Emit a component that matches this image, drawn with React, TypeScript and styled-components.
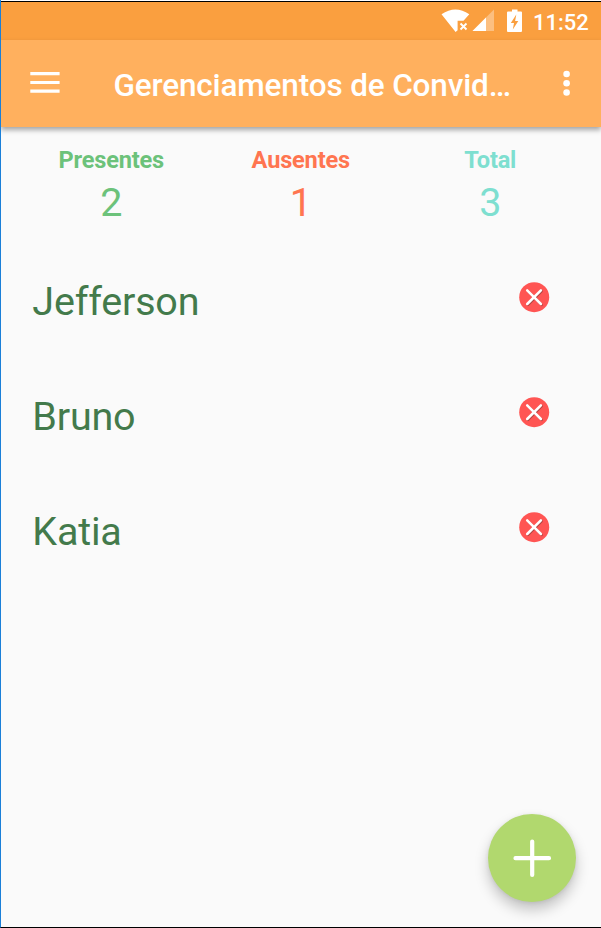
import React from "react";
import styled, { createGlobalStyle } from "styled-components";

const GlobalStyle = createGlobalStyle`
  * { box-sizing: border-box; }
  body { margin: 0; background: #fafafa; font-family: Roboto, sans-serif; }
  button { border: 0; padding: 0; background: none; font: inherit; color: inherit; display: block; }
  svg { display: block; }
`;

const Screen = styled.div`
  position: relative;
  display: flex;
  flex-direction: column;
  height: 928px;
  width: 601px;
  overflow: hidden;
  background: #fafafa;
  border-left: 1px solid #1a7fd8;
  border-bottom: 1px solid #000;
`;

const TopEdge = styled.div`
  height: 2px;
  flex: none;
  background: #fff;
  border-bottom: 1px solid #000;
`;

const StatusBar = styled.div`
  display: flex;
  flex: none;
  justify-content: flex-end;
  height: 38px;
  padding: 0 12px 0 0;
  background: #fa9f3f;
  color: #fff;
`;

const Clock = styled.time`
  width: 56px;
  margin-left: 8px;
  font-size: 22px;
  font-weight: 500;
  line-height: 41px;
  white-space: nowrap;
`;

const AppBar = styled.header`
  display: flex;
  flex: none;
  height: 87px;
  padding-left: 29px;
  background: #ffb05e;
  color: #fff;
  box-shadow: 0 3px 5px rgba(0, 0, 0, 0.34);
`;

const MenuButton = styled.button`
  width: 30px;
  height: 87px;
`;

const Title = styled.h1`
  width: 398px;
  margin: 0 0 0 53.5px;
  font-size: 31.5px;
  font-weight: 500;
  letter-spacing: -0.15px;
  line-height: 91px;
  white-space: nowrap;
`;

const MoreButton = styled.button`
  width: 8px;
  height: 87px;
  margin-left: 51px;
`;

const Summary = styled.section`
  display: grid;
  grid-template-columns: repeat(3, 189.5px);
  flex: none;
  height: 114px;
  padding: 19px 0 0 15.5px;
`;

const Stat = styled.div<{ $color: string }>`
  display: flex;
  flex-direction: column;
  align-items: center;
  color: ${(p) => p.$color};
`;

const StatLabel = styled.span`
  font-size: 23.6px;
  font-weight: 700;
  letter-spacing: -0.2px;
  line-height: 28px;
`;

const StatValue = styled.span`
  font-size: 39.5px;
  line-height: 46px;
  margin-top: 6px;
`;

const GuestList = styled.ul`
  margin: 0;
  padding: 0;
  list-style: none;
`;

const GuestRow = styled.li`
  display: flex;
  justify-content: space-between;
  height: 115px;
  padding: 37px 51px 0 31.3px;
`;

const GuestName = styled.span`
  color: #437a4b;
  font-size: 39.5px;
  letter-spacing: -0.2px;
  line-height: 48px;
`;

const RemoveButton = styled.button`
  width: 32px;
  height: 32px;
  margin-top: 3px;
`;

const AddButton = styled.button`
  position: absolute;
  right: 25px;
  bottom: 25px;
  width: 88px;
  height: 88px;
  border-radius: 50%;
  background: #b1d86e;
  box-shadow: 0 8px 14px rgba(0, 0, 0, 0.22), 0 1px 4px rgba(0, 0, 0, 0.08);
`;

const stats = [
  { label: "Presentes", value: 2, color: "#6cc27a" },
  { label: "Ausentes", value: 1, color: "#ff7550" },
  { label: "Total", value: 3, color: "#7edfd0" },
];

const guests = ["Jefferson", "Bruno", "Katia"];

const StatusIcons = () => (
  <svg width="84" height="38" viewBox="441 2 84 38" fill="#fff">
    <path d="M441.5 14.2Q455.5 4.8 469.3 14.2L463.5 20.7H457.6V30.2L455.6 32Z" />
    <path d="M460.5 23.5l6 6m0-6l-6 6" stroke="#fff" strokeWidth="1.9" />
    <path d="M494 9.5V31H472.5Z" opacity=".34" />
    <path d="M486 17.5V31H472.5Z" />
    <path
      fillRule="evenodd"
      d="M512 9.5h5.5v2H521q1 0 1 1V31q0 1-1 1h-13q-1 0-1-1V12.500q0-1 1-1h4ZM516.300 14.500l-5.500 8.500h3.200l-1.200 6.500 5.500-8.500h-3.200Z"
    />
  </svg>
);

const MenuIcon = () => (
  <svg width="30" height="87" viewBox="30 40 30 87" fill="#fff">
    <path d="M30.300 72h29.300v3.300H30.300zM30.300 81h29.300v3H30.300zM30.300 89.500h29.300v3.200H30.300z" />
  </svg>
);

const MoreIcon = () => (
  <svg width="8" height="87" viewBox="0 40 8 87" fill="#fff">
    <circle cx="3.600" cy="74" r="3.300" />
    <circle cx="3.600" cy="83.200" r="3.300" />
    <circle cx="3.600" cy="92.500" r="3.300" />
  </svg>
);

const RemoveIcon = () => (
  <svg width="32" height="32" viewBox="0 0 32 32" fill="none" strokeLinecap="round">
    <circle cx="16.200" cy="16.200" r="15" fill="#ff5553" />
    <path d="M10 10.200l13.700 13.700m0-13.700L10 23.900" stroke="#963f3b" strokeWidth="2.400" opacity=".75" />
    <path d="M9.200 9.300l13.700 13.700m0-13.700L9.200 23" stroke="#fff" strokeWidth="2.500" />
  </svg>
);

const PlusIcon = () => (
  <svg width="88" height="88" viewBox="0 0 88 88" stroke="#fff" strokeWidth="4.200" strokeLinecap="round">
    <path d="M27.500 44.200H61M44.200 27.500V61" />
  </svg>
);

export default function App() {
  return (
    <>
      <GlobalStyle />
      <Screen>
        <TopEdge />
        <StatusBar>
          <StatusIcons />
          <Clock>11:52</Clock>
        </StatusBar>
        <AppBar>
          <MenuButton aria-label="Menu"><MenuIcon /></MenuButton>
          <Title>Gerenciamentos de Convid…</Title>
          <MoreButton aria-label="Mais opções"><MoreIcon /></MoreButton>
        </AppBar>
        <Summary>
          {stats.map((s) => (
            <Stat key={s.label} $color={s.color}>
              <StatLabel>{s.label}</StatLabel>
              <StatValue>{s.value}</StatValue>
            </Stat>
          ))}
        </Summary>
        <GuestList>
          {guests.map((name) => (
            <GuestRow key={name}>
              <GuestName>{name}</GuestName>
              <RemoveButton aria-label={`Remover ${name}`}><RemoveIcon /></RemoveButton>
            </GuestRow>
          ))}
        </GuestList>
        <AddButton aria-label="Adicionar"><PlusIcon /></AddButton>
      </Screen>
    </>
  );
}
